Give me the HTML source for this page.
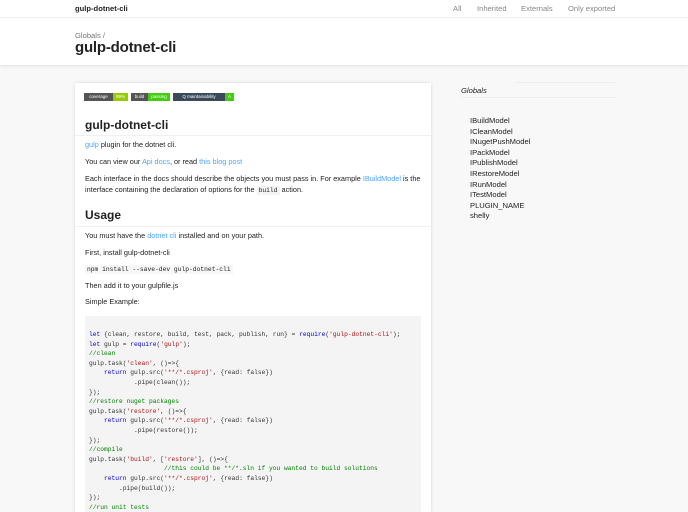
<!DOCTYPE html>
<html style="height:512px;overflow:hidden"><head><style>
*{margin:0;padding:0;box-sizing:border-box}
body{width:688px;height:512px;overflow:hidden;background:#f8f8f8;font-family:"Liberation Sans",sans-serif;color:#222;font-size:7.6px;position:relative}
.top{position:absolute;left:0;top:0;width:688px;height:65px;background:#fff;box-shadow:0 0 4px rgba(0,0,0,.15)}
.bar{position:absolute;left:0;top:0;width:688px;height:18px;border-bottom:1px solid #f0f0f0}
.brand{position:absolute;left:75px;top:4px;font-weight:bold;font-size:7.6px}
.nav{position:absolute;top:4px;font-size:7.6px;color:#888}
.crumb{position:absolute;left:75px;top:31px;color:#777;font-size:7.6px}
.title{position:absolute;left:75px;top:39px;font-size:15px;font-weight:bold;letter-spacing:-.2px}
.panel{position:absolute;left:75px;top:83px;width:356px;height:429px;background:#fff;box-shadow:0 0 3px rgba(0,0,0,.15);overflow:hidden}
.p{position:absolute;left:10px;line-height:10.5px;white-space:nowrap;font-size:7.3px}
a{color:#4da6ff;text-decoration:none}
h2{position:absolute;left:10px;font-size:12px;font-weight:bold}
.hr{position:absolute;left:0;width:356px;height:1px;background:#f0f0f0}
code,pre{font-family:"Liberation Mono",monospace}
.c{font-size:6.3px;background:#f4f4f4;padding:1px 2px}
pre{position:absolute;left:10px;top:233px;width:336px;height:230px;background:#f4f4f4;font-size:6.25px;line-height:9.6px;padding:14px 4px;color:#333}
.k{color:#0000d0}.s{color:#a31515}.g{color:#008000}
.badge{position:absolute;top:10px;height:8px;font-size:4.5px;line-height:8px;color:#fff;display:flex}
.badge span{display:block;text-align:center}
.side{position:absolute;left:461px}
</style></head><body>
<div class="top">
<div class="bar"></div>
<div class="brand">gulp-dotnet-cli</div>
<div class="nav" style="left:453px">All</div>
<div class="nav" style="left:477px">Inherited</div>
<div class="nav" style="left:521px">Externals</div>
<div class="nav" style="left:568px">Only exported</div>
<div class="crumb">Globals /</div>
<div class="title">gulp-dotnet-cli</div>
</div>
<div class="panel">
<div class="badge" style="left:9px"><span style="background:#555;width:29px">coverage</span><span style="background:#97ca00;width:15px">99%</span></div>
<div class="badge" style="left:56px"><span style="background:#555;width:17px">build</span><span style="background:#4c1;width:22px">passing</span></div>
<div class="badge" style="left:98px"><span style="background:#3b4a5a;width:52px">Q maintainability</span><span style="background:#4c1;width:9px">A</span></div>
<h2 style="top:35px">gulp-dotnet-cli</h2>
<div class="hr" style="top:52px"></div>
<div class="p" style="top:57px"><a>gulp</a> plugin for the dotnet cli.</div>
<div class="p" style="top:74px">You can view our <a>Api docs</a>, or read <a>this blog post</a></div>
<div class="p" style="top:91px">Each interface in the docs should describe the objects you must pass in. For example <a>IBuildModel</a> is the<br>interface containing the declaration of options for the <code class="c">build</code> action.</div>
<h2 style="top:125px">Usage</h2>
<div class="hr" style="top:143px"></div>
<div class="p" style="top:148px">You must have the <a>dotnet cli</a> installed and on your path.</div>
<div class="p" style="top:165px">First, install gulp-dotnet-cli</div>
<div class="p" style="top:181px"><code class="c" style="background:#f7f7f7">npm install --save-dev gulp-dotnet-cli</code></div>
<div class="p" style="top:198px">Then add it to your gulpfile.js</div>
<div class="p" style="top:214px">Simple Example:</div>
<pre><span class="k">let</span> {clean, restore, build, test, pack, publish, run} = <span class="k">require</span>(<span class="s">'gulp-dotnet-cli'</span>);
<span class="k">let</span> gulp = <span class="k">require</span>(<span class="s">'gulp'</span>);
<span class="g">//clean</span>
gulp.task(<span class="s">'clean'</span>, ()=>{
    <span class="k">return</span> gulp.src(<span class="s">'**/*.csproj'</span>, {read: false})
            .pipe(clean());
});
<span class="g">//restore nuget packages</span>
gulp.task(<span class="s">'restore'</span>, ()=>{
    <span class="k">return</span> gulp.src(<span class="s">'**/*.csproj'</span>, {read: false})
            .pipe(restore());
});
<span class="g">//compile</span>
gulp.task(<span class="s">'build'</span>, [<span class="s">'restore'</span>], ()=>{
                    <span class="g">//this could be **/*.sln if you wanted to build solutions</span>
    <span class="k">return</span> gulp.src(<span class="s">'**/*.csproj'</span>, {read: false})
        .pipe(build());
});
<span class="g">//run unit tests</span></pre>
</div>
<div style="position:absolute;left:515px;top:82px;width:100px;height:1px;background:#eee"></div>
<div class="side" style="top:86px;font-style:italic">Globals</div>
<div style="position:absolute;left:461px;top:97px;width:154px;height:1px;background:#eee"></div>
<div class="side" style="left:470px;top:116px;line-height:10.6px">IBuildModel<br>ICleanModel<br>INugetPushModel<br>IPackModel<br>IPublishModel<br>IRestoreModel<br>IRunModel<br>ITestModel<br>PLUGIN_NAME<br>shelly</div>
</body></html>
